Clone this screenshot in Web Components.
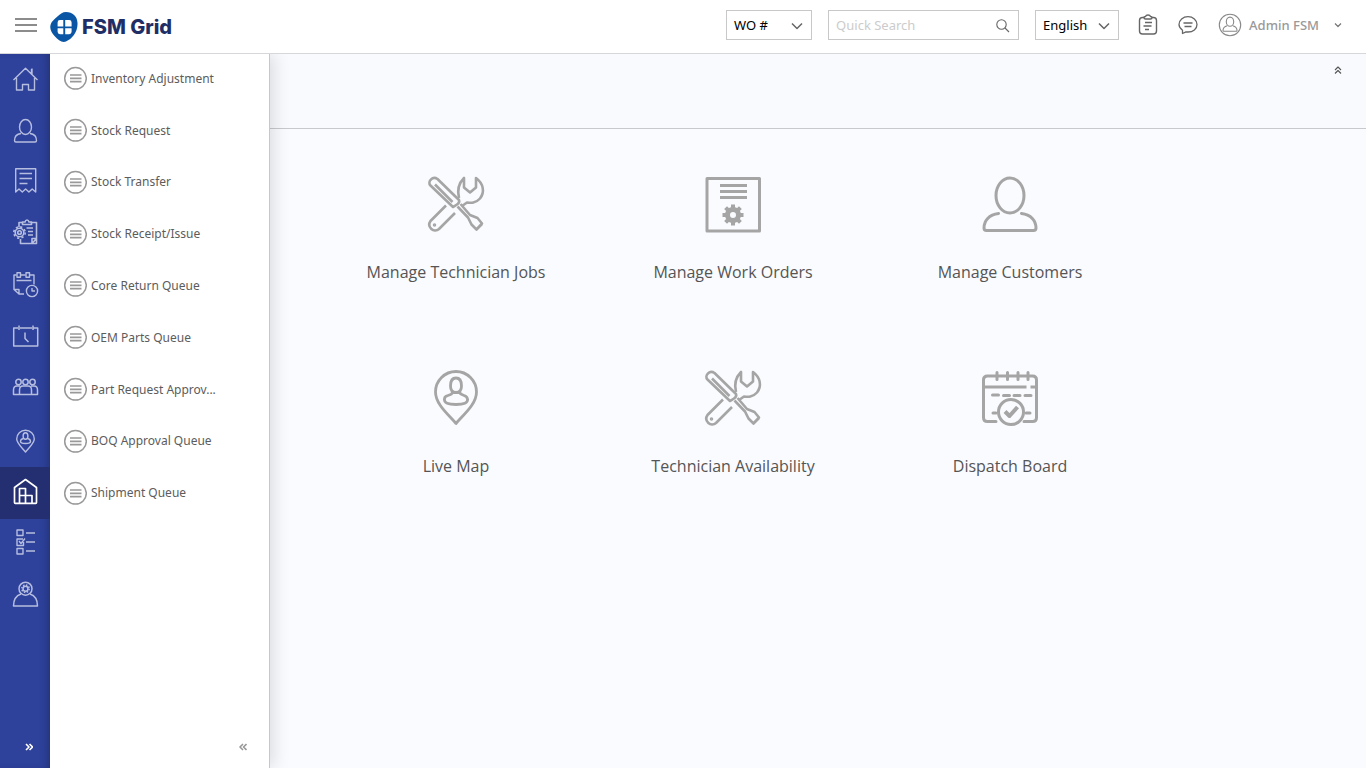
<!DOCTYPE html>
<html lang="en">
<head>
<meta charset="utf-8">
<meta name="viewport" content="width=device-width, initial-scale=1">
<title>FSM Grid</title>
<style>
    html, body { height: 100%; }
    body {
        margin: 0;
        font-family: "Noto Sans", "Open Sans", sans-serif;
        font-size: 13px;
        color: #555;
        background: #fafbfe;
    }
</style>
</head>
<body>

<fsm-app>
    <fsm-header slot="header"></fsm-header>
    <fsm-rail slot="rail"></fsm-rail>
    <fsm-menu slot="menu">
        <menu-item>Inventory Adjustment</menu-item>
        <menu-item>Stock Request</menu-item>
        <menu-item>Stock Transfer</menu-item>
        <menu-item>Stock Receipt/Issue</menu-item>
        <menu-item>Core Return Queue</menu-item>
        <menu-item>OEM Parts Queue</menu-item>
        <menu-item>Part Request Approv...</menu-item>
        <menu-item>BOQ Approval Queue</menu-item>
        <menu-item>Shipment Queue</menu-item>
    </fsm-menu>
    <fsm-tile icon="tools">Manage Technician Jobs</fsm-tile>
    <fsm-tile icon="order">Manage Work Orders</fsm-tile>
    <fsm-tile icon="customer">Manage Customers</fsm-tile>
    <fsm-tile icon="map">Live Map</fsm-tile>
    <fsm-tile icon="tools">Technician Availability</fsm-tile>
    <fsm-tile icon="board">Dispatch Board</fsm-tile>
</fsm-app>

<script>
// name: [width, height, stroke width, markup]
const ICONS = {
    // header
    burger: [22, 14, 2, `<path d="M0 1h22M0 7h22M0 13h22"/>`],
    logo: [28, 30, 0, `<path fill="#0a56a4" stroke="none" d="M16 0C22.500 0 27.300 4 27.500 11C28 20 22 27 16 29.500C12 31 8 28 5 24.500C2 21 0 18 .3 14.500C.6 10 4 7.500 8 4C10.500 1.800 12.500 0 16 0Z"/>
        <path fill="#fff" stroke="none" d="M10 8h3.300v6.400H7.600v-4Q7.600 8 10 8ZM15.200 8h4q2.400 0 2.400 2.400v4h-6.400ZM7.600 16.200h5.700v6h-3.300q-2.400 0-2.400-2.400ZM15.200 16.200h6.400v3.600q0 2.400-2.400 2.400h-4Z"/>`],
    chevron: [12, 8, 1.5, `<path d="M1 1.500l5 5 5-5"/>`],
    chevronSmall: [8, 6, 1.2, `<path d="M1 1.500l3 3 3-3"/>`],
    search: [14, 14, 1.1, `<circle cx="5.500" cy="5.500" r="4.700"/><path d="M9 9l4 4"/>`],
    clipboard: [20, 22, 1.4, `<path d="M6 3.500H4.500a3 3 0 0 0-3 3V17a3 3 0 0 0 3 3h11a3 3 0 0 0 3-3V6.500a3 3 0 0 0-3-3H14"/>
        <path d="M6 3.500Q6 2.500 7.500 2.500Q8 1 10 1T12.500 2.500Q14 2.500 14 3.500Q14 5 12.500 5h-5Q6 5 6 3.500ZM7 8.500h7M5.500 12h8M7 15.500h4"/>`],
    chat: [20, 20, 1.3, `<path d="M4.500 18.500v-3.200C2.500 13.800 1 11.800 1 9.500C1 5 5 1.700 10 1.700s9 3.300 9 7.800s-4 7.500-9 7.500q-1 0-2-.2Z"/><path d="M5.500 8h9M6.500 11.500h7"/>`],
    avatar: [24, 24, 1.1, `<circle cx="12" cy="12" r="10.700"/><ellipse cx="12" cy="8.700" rx="3.700" ry="4.600"/><path d="M9.200 12.800C6.500 13.500 5 15 5 17.500q0 .7.700.7h12.600q.7 0 .7-.7c0-2.500-1.500-4-4.200-4.700"/>`],
    up: [8, 8, 1.1, `<path d="M1 4l3-3 3 3M1 7.500l3-3 3 3"/>`],
    right: [8, 8, 1.6, `<path d="M1 1l3 3-3 3M4.500 1l3 3-3 3"/>`],
    left: [8, 8, 1.6, `<path d="M4 1L1 4l3 3M7.500 1l-3 3 3 3"/>`],

    // rail, all on a 28px square
    home: [28, 28, 1.4, `<path d="M2.500 16L14.500 4.300 26.500 16M20.500 5v5M21 4.500v6M5.500 14v12h6v-5.500h6V26h6V14"/>`],
    person: [28, 28, 1.4, `<ellipse cx="14.500" cy="11" rx="6" ry="7.500"/><path d="M10 17.500C6 18 3.500 20.500 3.500 24.500q0 1.500 1.500 1.500h19q1.500 0 1.500-1.500c0-4-2.500-6.500-6.500-7"/>`],
    receipt: [28, 28, 1.4, `<path d="M4.700 .8h20V24l-3.500-3-3.300 3-3.300-3-3.300 3-3.300-3-3.300 3ZM8.500 5.500h12.500M8.500 10.500h12.500M8.500 15.500h8"/>`],
    jobs: [28, 28, 1.6, `<path d="M8 8V3.500h3.500M19.500 3.500h6V24.500H9.500V20M21 24.500l4.500-5H21Z"/><path d="M11.500 5.500V3h2.500q.5-2 2-2T18 3h2.500v2.500ZM15.500 9h6.500M17 12.500h5M17 16h5"/><circle cx="8.500" cy="13.500" r="4.300"/><circle cx="8.500" cy="13.500" r="1.800"/><circle cx="8.500" cy="13.500" r="5.700" stroke-dasharray="2.200 2.276"/>`],
    schedule: [28, 28, 1.4, `<path d="M5.500 4H3v14.500l5 4.500h5M8 23v-4.500H3M9.500 4h5M18.500 4h4.500v9.500M5.500 9.500h15"/><rect x="6" y="1.700" width="3.500" height="4.500"/><rect x="15" y="1.700" width="3.500" height="4.500"/><circle cx="21" cy="20" r="5.600"/><path d="M21 17v3h3"/>`],
    calendar: [28, 28, 1.5, `<path d="M7 6H2.700v18h24V6h-4M9 6h12M8 3.500v4.500M22 3.500v4.500M14 10.500v6l3.500 3.500"/>`],
    group: [28, 28, 1.5, `<circle cx="7.500" cy="8" r="2.700"/><circle cx="14.500" cy="8" r="2.700"/><circle cx="21.500" cy="8" r="2.700"/><path d="M8.500 20.500V16Q8.500 12 12 12h5q3.500 0 3.500 4v4.500ZM8.500 20.500H2.500V16Q2.500 12 6 12h3M20.500 20.500h6V16Q26.500 12 23 12h-3"/>`],
    pin: [28, 28, 1.4, `<path d="M14.500 26C10 20.500 5.700 17 5.700 13a8.800 8.800 0 0 1 17.600 0c0 4-4.300 7.500-8.800 13Z"/><ellipse cx="14.500" cy="10" rx="2.400" ry="3.300"/><path d="M12.500 12.500Q9.500 13 9.500 15.500 9.500 17.500 14.500 17.500t5-2q0-2.500-3-3"/>`],
    stock: [28, 28, 1.7, `<path d="M3.500 25.500V10.500L14.500 2.500 25.500 10.500v15q0 .8-.8.800H4.300q-.8 0-.8-.8Z"/><path d="M8.500 26v-14.500h6V26M8.500 18.500h12.500V26"/>`],
    tasks: [28, 28, 1.4, `<rect x="6" y="1" width="6" height="5.500"/><path d="M12 10H6v6.500h6.500V13M8 12l2 2.500 4-5"/><rect x="6" y="19.500" width="6" height="5.500"/><path d="M15 4h9M15 13h9M15 22h9"/>`],
    technician: [28, 28, 1.5, `<circle cx="14.500" cy="7.700" r="6.500"/><circle cx="14.500" cy="7.700" r="2.500"/><circle cx="14.500" cy="7.700" r="3.700" stroke-dasharray="1.500 1.406"/><path d="M10 13C5.500 14.500 2.500 19 2.500 25h24c0-6-3-10.500-7.500-12"/>`],

    // side menu bullet
    bullet: [24, 24, 1.5, `<circle cx="12.500" cy="12.300" r="10.800"/><path stroke-width="1.700" d="M7 9h11.500M7 12.300h11.500M7 15.600h11.500"/>`],

    // tiles, all on a 60px square
    tools: [60, 60, 2.6, `<path d="M4.500 11.500C1 8 6.500 1.500 11.500 5L33 26Q34 28.500 31 30.500T27 33Z"/><path d="M9 10.500L26.500 28"/>
        <path d="M31.500 32.500L42 43.500 45.500 50.500 50.500 55.500 56 49.500 51.500 44 44 41 34.500 30M50 56L56 50"/>
        <path d="M20 31.500L4.500 47C.5 53 8 59.500 13 55L29 39"/><circle cx="8.500" cy="51" r="1" stroke-width="1.500"/>
        <path d="M33 24Q30 12 38 4V13.500L44 18.500 50 13.500V4C57.500 9.500 59 18 54 24.500C49.500 29.500 45 29 41 28.500L36 32"/>`],
    order: [60, 60, 3, `<path d="M4 4.500h52.500v52.500H4ZM17 11.500h27M17 17.500h27M17 23.500h27"/><circle cx="30" cy="41" r="5.500" stroke-width="5"/>
        <path stroke-width="4" stroke-linecap="butt" d="M30 30.500v5M30 46.500v5M19.500 41h5M35.500 41h5M22.600 33.600l3.400 3.400M34 45l3.400 3.400M37.400 33.600L34 37M26 45l-3.400 3.400"/>`],
    customer: [60, 60, 3, `<ellipse cx="30" cy="21.500" rx="14" ry="17.500"/><path stroke-linecap="round" d="M18.500 39.500C9 40.500 4 47 4 54q0 2.500 2.500 2.500h47q2.500 0 2.500-2.500c0-7-5-13.500-14.500-14.500"/>`],
    map: [60, 60, 2.800, `<path d="M30 55.500C23 47 9.500 36.500 9.500 24a20.500 20.500 0 0 1 41 0C50.500 36.500 37 47 30 55.500Z"/>
        <path d="M24.500 18Q24.500 10 30 10T35.500 18Q35.500 24.500 30 24.500T24.500 18ZM26.500 24.500Q26 26.500 22 27.500T18.500 31.500Q18 36.500 30 36.500T41.500 31.500Q41.500 28.500 38 27.500T33.500 24.500"/>`],
    board: [60, 60, 3, `<path stroke-linecap="round" d="M16 53.500H7.500q-4 0-4-4V12q0-4 4-4h45q4 0 4 4v37.500q0 4-4 4H44"/>
        <path stroke-linecap="round" d="M17 4.500v7M27.500 4.500v7M38 4.500v7M48 4.500v7M12.500 27h6M23.500 27.500h6M34 27.500h6M45 27.500h6M13 45h3M46 45h4"/>
        <path d="M4 19h42.500M50.500 19h6"/><circle cx="31" cy="44" r="12.500"/><path stroke-width="4" d="M25 43.500l4.500 4.500 8-9"/>`]
};

class FsmIcon extends HTMLElement {
    constructor(){
        super();
        this.attachShadow({mode: "open"});
    }
    connectedCallback(){
        const [w, h, stroke, body] = ICONS[this.getAttribute("name")];
        this.shadowRoot.innerHTML = `
        <style>
            :host { display: block; flex: none; }
            svg { display: block; }
        </style>
        <svg width="${w}" height="${h}" viewBox="0 0 ${w} ${h}" fill="none" stroke="currentColor"
             stroke-width="${stroke}" stroke-linejoin="round" aria-hidden="true">${body}</svg>`;
    }
}

const headerTemplate = document.createElement("template");
headerTemplate.innerHTML = `
<style>
    :host {
        display: flex;
        align-items: center;
        box-sizing: border-box;
        height: 54px;
        padding: 0 24px 3px 15px;
        background: #fff;
        border-bottom: 1px solid #d5d7da;
        color: #666;
    }
    button {
        display: flex;
        align-items: center;
        padding: 0;
        border: 0;
        background: none;
        color: inherit;
        font: inherit;
    }
    .burger { color: #8c8c8c; }
    .logo {
        display: flex;
        align-items: center;
        gap: 4px;
        margin-left: 13px;
        margin-top: 3px;
        color: #1f2f66;
        font: 800 20px/30px Inter, sans-serif;
        text-decoration: none;
    }
    .tools {
        display: flex;
        align-items: center;
        gap: 16px;
        margin-left: auto;
    }
    .field { position: relative; }
    .field fsm-icon {
        position: absolute;
        right: 9px;
        top: 12px;
        pointer-events: none;
    }
    .field .find {
        top: 9px;
    }
    select, input {
        display: block;
        box-sizing: border-box;
        height: 30px;
        padding: 0 7px;
        border: 1px solid #c8c8c8;
        border-radius: 0;
        background: #fff;
        font: inherit;
        color: #000;
        appearance: none;
        outline: none;
    }
    .kind { width: 86px; }
    .lang { width: 84px; }
    input { width: 191px; }
    input::placeholder { color: #ccc; }
    .icons {
        display: flex;
        align-items: center;
        gap: 20px;
        margin-left: 3px;
    }
    .user {
        gap: 7px;
        color: #999;
        font-weight: 500;
    }
    .user fsm-icon:first-child { color: #888; }
    .user fsm-icon:last-child { margin-left: 8px; color: #777; }
</style>
<button class="burger" aria-label="Toggle menu"><fsm-icon name="burger"></fsm-icon></button>
<a class="logo" href="#"><fsm-icon name="logo"></fsm-icon><span>FSM Grid</span></a>
<div class="tools">
    <div class="field">
        <select class="kind" aria-label="Search type"><option>WO #</option></select>
        <fsm-icon name="chevron"></fsm-icon>
    </div>
    <div class="field">
        <input type="text" placeholder="Quick Search" aria-label="Quick Search">
        <fsm-icon class="find" name="search"></fsm-icon>
    </div>
    <div class="field">
        <select class="lang" aria-label="Language"><option>English</option></select>
        <fsm-icon name="chevron"></fsm-icon>
    </div>
    <div class="icons">
        <button aria-label="Notes"><fsm-icon name="clipboard"></fsm-icon></button>
        <button aria-label="Messages"><fsm-icon name="chat"></fsm-icon></button>
        <button class="user"><fsm-icon name="avatar"></fsm-icon><span>Admin FSM</span><fsm-icon name="chevronSmall"></fsm-icon></button>
    </div>
</div>
`;

class FsmHeader extends HTMLElement {
    constructor(){
        super();
        this.attachShadow({mode: "open"});
        this.shadowRoot.appendChild(headerTemplate.content.cloneNode(true));
    }
}

const RAIL = [
    ["home", "Home"], ["person", "Customers"], ["receipt", "Invoices"], ["jobs", "Jobs"],
    ["schedule", "Schedule"], ["calendar", "Calendar"], ["group", "Teams"], ["pin", "Live map"],
    ["stock", "Inventory"], ["tasks", "Tasks"], ["technician", "Technicians"]
];

class FsmRail extends HTMLElement {
    constructor(){
        super();
        this.attachShadow({mode: "open"});
        this.active = "stock";
    }
    connectedCallback(){
        this.shadowRoot.innerHTML = `
        <style>
            :host {
                display: flex;
                flex-direction: column;
                justify-content: space-between;
                width: 50px;
                background: #2e419b;
                color: #b6bee0;
                box-shadow: inset -6px 0 8px -4px rgba(0, 0, 0, .25);
            }
            nav {
                display: grid;
                grid-auto-rows: 1fr;
                height: 568px;
            }
            a {
                display: flex;
                align-items: center;
                justify-content: center;
                padding-bottom: 3px;
                color: inherit;
            }
            a.active {
                background: #232f70;
                color: #fff;
            }
            button {
                align-self: flex-end;
                margin: 0 17px 17px 0;
                padding: 0;
                border: 0;
                background: none;
                color: #fff;
            }
        </style>
        <nav>${RAIL.map(([icon, label]) => `
            <a href="#${icon}" aria-label="${label}" class="${icon === this.active ? "active" : ""}"><fsm-icon name="${icon}"></fsm-icon></a>`).join("")}
        </nav>
        <button aria-label="Expand"><fsm-icon name="right"></fsm-icon></button>`;
    }
}

const menuTemplate = document.createElement("template");
menuTemplate.innerHTML = `
<style>
    :host {
        display: flex;
        flex-direction: column;
        justify-content: space-between;
        box-sizing: border-box;
        width: 220px;
        background: #fff;
        border-right: 1px solid #c6c7c9;
        box-shadow: 4px 0 16px rgba(0, 0, 0, .12);
        clip-path: inset(0 -24px 0 0);
    }
    nav {
        display: grid;
        grid-auto-rows: 1fr;
        height: 466px;
    }
    button {
        align-self: flex-end;
        margin: 0 22px 17px 0;
        padding: 0;
        border: 0;
        background: none;
        color: #999;
    }
</style>
<nav><slot></slot></nav>
<button aria-label="Collapse"><fsm-icon name="left"></fsm-icon></button>
`;

class FsmMenu extends HTMLElement {
    constructor(){
        super();
        this.attachShadow({mode: "open"});
        this.shadowRoot.appendChild(menuTemplate.content.cloneNode(true));
    }
}

const itemTemplate = document.createElement("template");
itemTemplate.innerHTML = `
<style>
    :host { display: grid; }
    a {
        display: flex;
        align-items: center;
        gap: 4px;
        padding: 0 13px 3px;
        color: #5c5c5c;
        font-size: 12px;
        text-decoration: none;
        white-space: nowrap;
    }
    fsm-icon { color: #999; }
</style>
<a href="#"><fsm-icon name="bullet"></fsm-icon><span><slot></slot></span></a>
`;

class MenuItem extends HTMLElement {
    constructor(){
        super();
        this.attachShadow({mode: "open"});
        this.shadowRoot.appendChild(itemTemplate.content.cloneNode(true));
    }
}

class FsmTile extends HTMLElement {
    constructor(){
        super();
        this.attachShadow({mode: "open"});
    }
    connectedCallback(){
        this.shadowRoot.innerHTML = `
        <style>
            :host { display: block; }
            a {
                display: flex;
                flex-direction: column;
                align-items: center;
                gap: 26px;
                color: #555;
                font: 16px/24px "Open Sans", "Noto Sans", sans-serif;
                text-decoration: none;
            }
            fsm-icon { color: #a5a5a5; }
        </style>
        <a href="#"><fsm-icon name="${this.getAttribute("icon")}"></fsm-icon><span><slot></slot></span></a>`;
    }
}

const appTemplate = document.createElement("template");
appTemplate.innerHTML = `
<style>
    :host {
        display: flex;
        flex-direction: column;
        min-height: 100vh;
    }
    .body {
        position: relative;
        display: flex;
        flex: 1;
    }
    /* the menu flies out over the page */
    .menu {
        position: absolute;
        top: 0;
        bottom: 0;
        left: 50px;
        display: flex;
    }
    .page { flex: 1; }
    .bar {
        display: flex;
        align-items: flex-start;
        justify-content: flex-end;
        box-sizing: border-box;
        height: 75px;
        padding: 12px 24px;
        border-bottom: 1px solid #c8c9cc;
        background: #f9fafd;
    }
    .bar button {
        padding: 0;
        border: 0;
        background: none;
        color: #555;
    }
    .tiles {
        display: grid;
        grid-template-columns: repeat(3, minmax(0, 277px));
        justify-content: center;
        row-gap: 84px;
        padding: 45px 0 45px 50px;
    }
</style>
<slot name="header"></slot>
<div class="body">
    <slot name="rail"></slot>
    <main class="page">
        <div class="bar"><button aria-label="Hide bar"><fsm-icon name="up"></fsm-icon></button></div>
        <div class="tiles"><slot></slot></div>
    </main>
    <div class="menu"><slot name="menu"></slot></div>
</div>
`;

class FsmApp extends HTMLElement {
    constructor(){
        super();
        this.attachShadow({mode: "open"});
        this.shadowRoot.appendChild(appTemplate.content.cloneNode(true));
    }
}

customElements.define("fsm-icon", FsmIcon);
customElements.define("fsm-header", FsmHeader);
customElements.define("fsm-rail", FsmRail);
customElements.define("menu-item", MenuItem);
customElements.define("fsm-menu", FsmMenu);
customElements.define("fsm-tile", FsmTile);
customElements.define("fsm-app", FsmApp);
</script>
</body>
</html>
